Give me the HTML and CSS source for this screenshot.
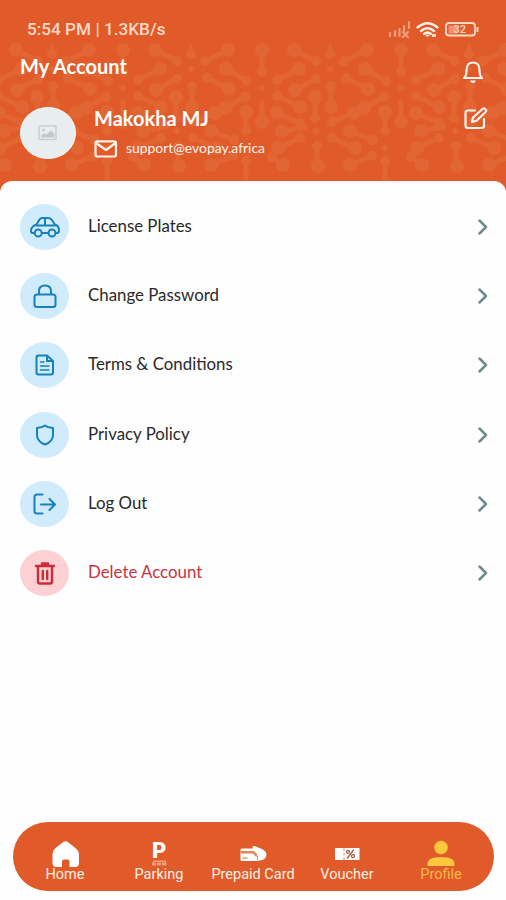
FILE: index.html
```
<!DOCTYPE html>
<html lang="en">
<head>
<meta charset="utf-8">
<title>My Account</title>
<link rel="stylesheet" href="styles.css">
</head>
<body>
<main class="screen">
  <header class="header">
    <svg class="motif" width="506" height="190" viewBox="0 0 506 190" aria-hidden="true">
      <defs>
        <g id="tile">
          <path class="bonds" d="M262 50V72M294 50L316 61M367 50L344 61M299 69L277 80M365 69L386 81M316 79L295 90M346 78L368 89M331 86V107M315 97V118M277 96L300 107M384 97L364 108M262 102V122M277 113L300 123M282 131L305 127M354 113L332 122M300 138L278 148M272 157L283 165M317 146V166M332 138L355 148M350 131L373 140M372 156L350 165M385 112V131M385 160V182"/>
          <path class="large" d="M262 50h0M294 50h0M367 50h0M299 69h0M365 69h0M295 90h0M368 89h0M331 107h0M315 97h0M300 107h0M364 108h0M262 122h0M277 113h0M282 131h0M354 113h0M278 148h0M283 165h0M318 166h0M355 148h0M350 131h0M350 165h0M385 112h0"/>
          <path class="small" d="M262 72h0M316 61h0M344 61h0M277 80h0M386 81h0M316 79h0M346 78h0M331 86h0M315 118h0M277 96h0M384 97h0M300 123h0M332 122h0M300 138h0M272 157h0M317 146h0M332 138h0M373 140h0M372 156h0M385 131h0M385 161h0M330 54h0"/>
          <path class="spark" d="M330 42L326 53H334ZM330 65l4 4-4 4-4-4ZM262 84l4 4-4 4-4-4ZM316 127l4 4-4 4-4-4ZM385 144l4 4-4 4-4-4Z"/>
        </g>
      </defs>
      <use href="#tile" x="-278"/><use href="#tile" x="-139"/><use href="#tile"/><use href="#tile" x="139"/>
    </svg>
    <div class="status">
      <span>5:54 PM | 1.3KB/s</span>
      <svg width="92" height="20" viewBox="0 0 92 20">
        <g class="signal"><path d="M2 13v3M7 11v5M11.500 9v7M16 6v5M21 2v6M15 12l5 5M20 12l-5 5"/></g>
        <g class="wifi"><path d="M29.500 7.500Q39.500-1 49.500 7.500M33 11Q39.500 5.500 46 11M36 14Q39.500 11 43 14"/><path class="fill" d="M36.500 14.500h6L39.500 17ZM44 14h4v3h-4Z"/></g>
        <rect class="cell" x="58" y="3" width="29" height="12.500" rx="3"/>
        <path class="tip" d="M88.500 7h2v5h-2z"/><path class="charge" d="M60.500 5.500h9v8h-9z"/>
        <text class="percent" x="65.500" y="13">32</text>
      </svg>
    </div>
    <div class="title-row">
      <h1>My Account</h1>
      <svg class="line-icon" width="22" height="24" viewBox="0 0 22 24"><path d="M2 18C4.500 16 4.500 13 4.500 10C4.500 5 7 2.500 11 2.500S17.500 5 17.500 10C17.500 13 17.500 16 20 18Z"/><path class="fill" d="M8 20.500h6q-1 2.500-3 2.500t-3-2.500Z"/></svg>
    </div>
    <div class="profile">
      <div class="avatar">
        <svg width="20" height="16" viewBox="0 0 20 16"><rect x="1" y="1" width="17" height="13.500" rx="1"/><circle cx="5.500" cy="5" r="1.300"/><path d="M3 12.500v-2l3.500-2 2 1 4.500-4 3.500 3.500v3.500z"/></svg>
      </div>
      <div class="identity">
        <h2>Makokha MJ</h2>
        <div class="mail">
          <svg class="line-icon" width="24" height="18" viewBox="0 0 24 18"><rect x="1.500" y="1.300" width="20.500" height="15.200" rx="2"/><path d="M2 3L12 10L21.500 3"/></svg>
          <span>support@evopay.africa</span>
        </div>
      </div>
      <svg class="line-icon edit" width="24" height="23" viewBox="0 0 24 23"><path d="M11 3.500H4Q1.500 3.500 1.500 6V18.500Q1.500 21 4 21H17.500Q20 21 20 18.500V12"/><path d="M8 15L9 10.500L18.500 2Q20 .800 21.500 2.200T21.500 5L12.500 13.800Z"/></svg>
    </div>
  </header>
  <section class="sheet">
    <a class="row"><span class="disc"><svg width="32" height="24" viewBox="0 0 32 24"><path d="M5.500 18H3.500Q2 18 2 15.500T4.500 11L7.500 9.500L10.500 4.500Q11.500 3 13.500 3H19Q21 3 22.500 4.500L26 9.500Q30 11 30 15.500Q30 18 28 18H26.500M13 18H19M8 10.500H26M16 3V10.500"/><circle cx="9.200" cy="18" r="3.500"/><circle cx="23" cy="18" r="3.500"/></svg></span><span class="label">License Plates</span><svg class="chevron" width="10" height="16" viewBox="0 0 10 16"><path d="M1.500 1.500L8 8L1.500 14.500"/></svg></a>
    <a class="row"><span class="disc"><svg width="24" height="26" viewBox="0 0 24 26"><rect x="1.500" y="11.500" width="21" height="12.500" rx="2.500"/><path d="M6 11V8Q6 2.500 12 2.500T18 8V11"/></svg></span><span class="label">Change Password</span><svg class="chevron" width="10" height="16" viewBox="0 0 10 16"><path d="M1.500 1.500L8 8L1.500 14.500"/></svg></a>
    <a class="row"><span class="disc"><svg width="20" height="22" viewBox="0 0 20 22"><path d="M3.500 1.500H12L18 7V18.500Q18 20.500 16 20.500H3.500Q1.500 20.500 1.500 18.500V3.500Q1.500 1.500 3.500 1.500ZM12 1.500V7H18"/><path class="fine" d="M5.500 8H9M5.500 12H14M5.500 16H14"/></svg></span><span class="label">Terms &amp; Conditions</span><svg class="chevron" width="10" height="16" viewBox="0 0 10 16"><path d="M1.500 1.500L8 8L1.500 14.500"/></svg></a>
    <a class="row"><span class="disc"><svg width="20" height="22" viewBox="0 0 20 22"><path d="M10 1.500Q12.500 3.500 18 4V11Q18 17.500 10 20.500Q2 17.500 2 11V4Q7.500 3.500 10 1.500Z"/></svg></span><span class="label">Privacy Policy</span><svg class="chevron" width="10" height="16" viewBox="0 0 10 16"><path d="M1.500 1.500L8 8L1.500 14.500"/></svg></a>
    <a class="row"><span class="disc"><svg width="24" height="22" viewBox="0 0 24 22"><path d="M9.500 1.500H4Q1.500 1.500 1.500 4V18Q1.500 20.500 4 20.500H9.500M8 11.500H22M16.500 6L22 11.500L16.500 17"/></svg></span><span class="label">Log Out</span><svg class="chevron" width="10" height="16" viewBox="0 0 10 16"><path d="M1.500 1.500L8 8L1.500 14.500"/></svg></a>
    <a class="row danger"><span class="disc"><svg width="20" height="23" viewBox="0 0 20 23"><path d="M1 4H19M7 3V1.500H13V3M3 4V19.500Q3 21.500 5 21.500H15Q17 21.500 17 19.500V4M7.800 9V17M12.200 9V17"/></svg></span><span class="label">Delete Account</span><svg class="chevron" width="10" height="16" viewBox="0 0 10 16"><path d="M1.500 1.500L8 8L1.500 14.500"/></svg></a>
  </section>
  <nav class="tabs">
    <a class="tab"><svg width="28" height="28" viewBox="0 0 28 28"><path d="M4 8.500L12.500 1.800Q14.500 .500 16.500 1.800L25 8.500Q28 11 28 14V23Q28 27 24 27H18.500V21.500Q18.500 19.500 16.500 19.500H13Q11 19.500 11 21.500V27H5.500Q1.500 27 1.500 23V14Q1.500 11 4 8.500Z"/></svg><span>Home</span></a>
    <a class="tab"><svg width="28" height="28" viewBox="0 0 28 28"><text class="p-mark" x="7" y="18">P</text><path class="faint" d="M8 20.500h13v1.500h-13zM7 22.500h4v3h-4zM12 22.500h4v3h-4zM17 22.500h4.500v3h-4.500z"/></svg><span>Parking</span></a>
    <a class="tab"><svg width="28" height="28" viewBox="0 0 28 28"><path d="M3 8.500H14L13.500 6.500Q14.500 5.500 17 6.500L24 9.500Q27 11 27.500 14Q27.500 18.500 23.500 20L18 21H3Q1.500 21 1.500 19.500V10Q1.500 8.500 3 8.500Z"/><path class="cut" d="M1.500 11H15L18 14V16.500H16.500L14 13.500H1.500Z"/><path class="cut" d="M3.500 17.500h5v1.200h-5zM18 16h1v4h-1z"/></svg><span>Prepaid Card</span></a>
    <a class="tab"><svg width="28" height="28" viewBox="0 0 28 28"><path d="M2 8H26.500V20H2Z"/><path class="cut" d="M10.500 8h1v3h-1zM10.500 13h1v2.500h-1zM10.500 17.500h1V20h-1z"/><path class="discount" d="M20.500 10L14.500 18"/><circle class="discount" cx="15" cy="11.800" r="1.500"/><circle class="discount" cx="20" cy="16.200" r="1.500"/></svg><span>Voucher</span></a>
    <a class="tab active"><svg width="28" height="28" viewBox="0 0 28 28"><circle cx="14" cy="7.500" r="6.800"/><path d="M.500 26V24Q.500 17 14 17T27.500 24V26Z"/></svg><span>Profile</span></a>
  </nav>
</main>
</body>
</html>
```
FILE: styles.css
```
* { box-sizing: border-box; }
body { margin: 0; background: #fff; font-family: Lato, sans-serif; }
.screen { width: 506px; height: 900px; display: flex; flex-direction: column; overflow: hidden; background: #fefefe; }
svg { display: block; flex: none; fill: none; stroke-linecap: round; stroke-linejoin: round; overflow: visible; }
.header { position: relative; height: 191px; flex: none; background: #e05b29; color: #fff4ed; }
.motif { position: absolute; left: 0; top: 0; overflow: hidden; }
.bonds { stroke: #e26633; stroke-width: 5; }
.large { stroke: #e26633; stroke-width: 14; }
.small { stroke: #e26633; stroke-width: 10; }
.spark { fill: #e26633; }
.status, .title-row, .profile { position: relative; display: flex; justify-content: space-between; }
.status { height: 52px; padding: 20px 26px 0 27px; font: 500 17.200px/19px Roboto, sans-serif; color: #fbd9c8; }
.signal { stroke: #f09d79; stroke-width: 2.200; }
.wifi { stroke: #fff0e5; stroke-width: 2.400; }
.fill { fill: currentColor; stroke: none; }
.cell { stroke: #fbd9c3; stroke-width: 1.800; }
.tip { fill: #fbd9c3; }
.charge { fill: #f58f70; }
.percent { font: 500 11px Roboto, sans-serif; fill: #fbd9c3; }
.title-row { height: 55px; padding: 1px 22px 0 20px; }
.title-row svg { margin-top: 7px; }
h1, h2 { margin: 0; color: #fff; font-weight: 700; white-space: nowrap; }
h1 { font-size: 20px; line-height: 26px; }
h2 { font-size: 20px; line-height: 22px; }
.line-icon { stroke: #fff4ed; stroke-width: 2.200; }
.profile { padding: 0 18px 0 20px; }
.avatar { width: 56px; height: 52px; border-radius: 50%; background: #e8edf0; border: 1.500px solid #f9f5f1; display: flex; align-items: center; justify-content: center; }
.avatar rect { stroke: #c7cecf; stroke-width: 1.500; }
.avatar circle, .avatar path { fill: #c1caca; }
.identity { flex: 1; margin-left: 18px; }
.mail { display: flex; align-items: center; gap: 8px; margin-top: 10px; height: 20px; font-size: 13.900px; line-height: 18px; }
.mail span { position: relative; top: -1px; }
.sheet { position: relative; margin-top: -10px; flex: 1; background: #fefefe; border-radius: 12px 12px 0 0; padding: 11.500px 18px 0 20px; }
.row { height: 69.200px; display: flex; align-items: center; color: #292929; }
.disc { width: 49px; height: 46px; border-radius: 50%; background: #d0ebfb; display: flex; align-items: center; justify-content: center; stroke: #1681bd; stroke-width: 2; }
.fine { stroke-width: 1.300; }
.label { flex: 1; margin-left: 19px; font-size: 16.850px; line-height: 24px; position: relative; top: -1px; white-space: nowrap; }
.chevron { stroke: #6e8c8e; stroke-width: 2.500; }
.danger { color: #c93340; }
.danger .disc { background: #fdd0d3; stroke: #cc2b3a; stroke-width: 2.400; }
.tabs { height: 69px; margin: 0 12px 9.500px 13px; padding: 0 6px 0 5px; flex: none; border-radius: 35px; background: #e05b29; display: flex; color: #fff0e6; }
.tab { flex: 1; display: flex; flex-direction: column; align-items: center; padding-top: 18px; font: 400 14.500px/16px Roboto, sans-serif; white-space: nowrap; }
.tab svg { fill: #fff; height: 28px; }
.tab span { margin-top: -1px; }
.p-mark { font: 900 22px Roboto, sans-serif; }
.faint { fill: #f0a17d; }
.cut { fill: #e58359; }
.discount { stroke: #a55b42; stroke-width: 1.300; fill: none; }
.tab.active { color: #fbb84a; }
.tab.active svg { fill: #ffc83c; }
```
